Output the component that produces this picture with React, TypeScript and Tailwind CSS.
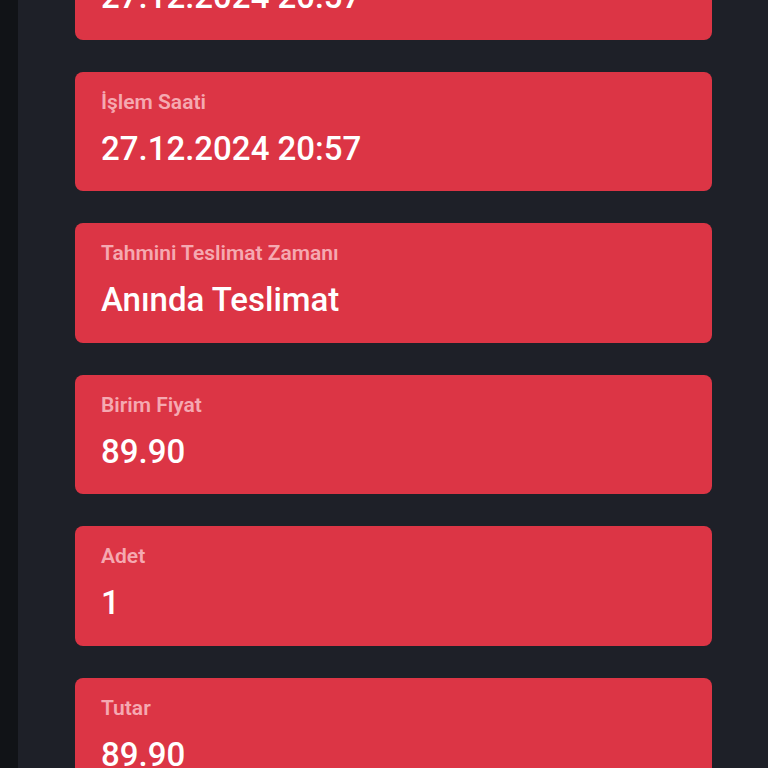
import React from "react";

const items = [
  { label: "İşlem Tarihi", value: "27.12.2024 20:57" },
  { label: "İşlem Saati", value: "27.12.2024 20:57" },
  { label: "Tahmini Teslimat Zamanı", value: "Anında Teslimat" },
  { label: "Birim Fiyat", value: "89.90" },
  { label: "Adet", value: "1" },
  { label: "Tutar", value: "89.90" },
];

export default function App() {
  return (
    <div
      className="flex h-[768px] w-[768px] overflow-hidden bg-[#1e2028]"
      style={{ fontFamily: "Roboto, 'Noto Sans', sans-serif" }}
    >
      <div className="w-[18px] shrink-0 bg-[#111317]" />
      <div className="flex-1 pl-[57px] pr-[56px]">
        <div className="-mt-[80px] flex flex-col gap-[32px]">
          {items.map((it, i) => (
            <div
              key={i}
              className="flex h-[119.5px] flex-col rounded-lg bg-[#dc3545] pl-[26px] pt-[16px]"
            >
              <div className="text-[21px] font-semibold leading-[28px] text-[#f5a9b1]">
                {it.label}
              </div>
              <div className="mt-[13px] text-[33px] font-medium leading-[40px] text-white">
                {it.value}
              </div>
            </div>
          ))}
        </div>
      </div>
    </div>
  );
}
